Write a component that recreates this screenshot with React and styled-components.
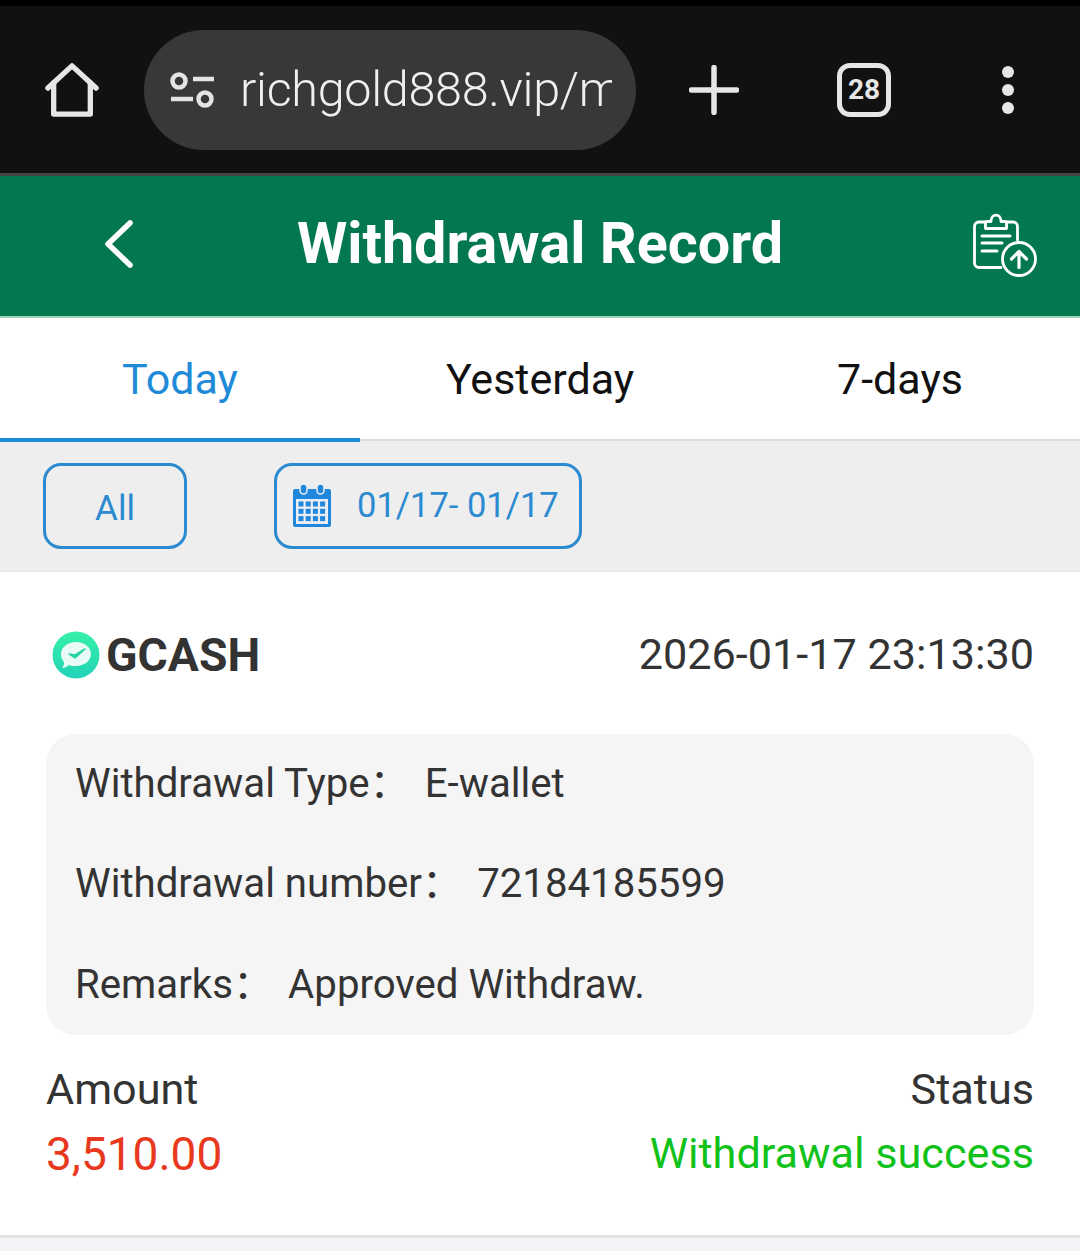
import React from 'react'
import styled, { createGlobalStyle } from 'styled-components'

const GlobalStyle = createGlobalStyle`
  html, body {
    margin: 0;
    padding: 0;
    background: #f2f3f7;
  }
  body {
    font-family: Roboto, "Noto Sans CJK SC", sans-serif;
  }
`

const Page = styled.div`
  width: 1080px;
  height: 1251px;
  overflow: hidden;
  background: #f2f3f7;
`

const BrowserBar = styled.div`
  height: 167px;
  border-top: 6px solid #000;
  border-bottom: 3px solid #444;
  background: #111;
  display: grid;
  grid-template-columns: 144px 492px 156px 144px 144px;
  align-items: center;
  color: #e6e6e6;
`

const BarIcon = styled.div`
  display: flex;
  align-items: center;
  justify-content: center;
`

const UrlPill = styled.div`
  height: 120px;
  border-radius: 60px;
  background: #383838;
  display: flex;
  align-items: center;
  padding: 0 24px 0 25px;
  gap: 25px;
  overflow: hidden;
`

const UrlText = styled.div`
  flex: 1;
  font-size: 48.5px;
  line-height: 60px;
  font-weight: 300;
  color: #f0f0f0;
  white-space: nowrap;
  overflow: hidden;
  letter-spacing: -0.3px;
`

const TabCount = styled.div`
  width: 44px;
  height: 44px;
  border: 5px solid #e6e6e6;
  border-radius: 13px;
  display: flex;
  align-items: center;
  justify-content: center;
  font-size: 28px;
  font-weight: 700;
`

const Header = styled.header`
  height: 140px;
  border-bottom: 2px solid #9ed0ba;
  background: #03784e;
  display: grid;
  grid-template-columns: 110px 1fr 110px;
  align-items: center;
  color: #fff;
`

const Title = styled.h1`
  margin: -4px 0 0;
  text-align: center;
  font-size: 57.5px;
  line-height: 66px;
  font-weight: 700;
`

const BackIcon = styled.div`
  display: flex;
  justify-content: flex-end;
  margin: -4px -26px 0 0;
`

const RecordIcon = styled.div`
  display: flex;
  justify-content: flex-end;
  padding-right: 43px;
  margin-top: -2px;
`

const Tabs = styled.nav`
  height: 124px;
  background: #fff;
  display: grid;
  grid-template-columns: repeat(3, 360px);
  box-sizing: border-box;
  border-bottom: 3px solid #ddd;
`

const Tab = styled.div`
  height: 124px;
  box-sizing: border-box;
  padding-top: 1px;
  display: flex;
  align-items: center;
  justify-content: center;
  font-size: 43px;
  color: ${p => (p.$active ? '#1f8bd8' : '#111')};
  border-bottom: 4px solid ${p => (p.$active ? '#1f8bd8' : 'transparent')};
`

const FilterBar = styled.div`
  height: 130px;
  box-sizing: border-box;
  margin-top: -1px;
  padding: 22px 0 0 43px;
  background: #eee;
  display: flex;
  align-items: flex-start;
  gap: 87px;
`

const FilterButton = styled.div`
  height: 86px;
  box-sizing: border-box;
  border: 3px solid #2b8ad0;
  border-radius: 18px;
  display: flex;
  align-items: center;
  width: ${p => p.$width}px;
  color: #2b8ad0;
`

const AllLabel = styled.span`
  width: 100%;
  margin-top: 4px;
  text-align: center;
  font-size: 35px;
`

const DateLabel = styled.span`
  margin: 0 0 2px 25px;
  font-size: 34.5px;
`

const CalendarWrap = styled.span`
  display: flex;
  margin-left: 15px;
`

const Card = styled.section`
  height: 667px;
  box-sizing: border-box;
  background: #fff;
  border-top: 1px solid #e6e6e6;
  border-bottom: 3px solid #e2e2e4;
  padding: 0 46px;
  color: #333;
`

const CardHead = styled.div`
  height: 162px;
  box-sizing: border-box;
  padding-top: 3px;
  display: flex;
  align-items: center;
  justify-content: space-between;
`

const Brand = styled.div`
  display: flex;
  align-items: center;
  gap: 6px;
  font-size: 46.3px;
  font-weight: 700;
  margin-left: 6px;
`

const Stamp = styled.div`
  font-size: 43.2px;
`

const Details = styled.div`
  height: 301px;
  box-sizing: border-box;
  padding: 0 29px;
  border-radius: 30px;
  background: #f5f5f5;
  display: flex;
  flex-direction: column;
  justify-content: space-around;
`

const DetailRow = styled.div`
  font-size: 40.2px;
  line-height: 48px;
  display: flex;
  gap: 15px;
  white-space: nowrap;
`

const Footer = styled.div`
  display: flex;
  justify-content: space-between;
  margin-top: 30px;
`

const FooterCol = styled.div`
  display: flex;
  flex-direction: column;
  gap: 14px;
  align-items: ${p => (p.$right ? 'flex-end' : 'flex-start')};
`

const Label = styled.div`
  font-size: 43.2px;
  line-height: 50px;
`

const Amount = styled.div`
  font-size: 46px;
  line-height: 50px;
  color: #e8391f;
`

const Status = styled.div`
  font-size: 43.2px;
  line-height: 50px;
  color: #10c21a;
`

const HomeIcon = () => (
  <svg width="54" height="54" viewBox="0 0 56 56" fill="none" stroke="#e6e6e6" strokeWidth="5.5" strokeLinejoin="round" strokeLinecap="round">
    <path d="M3 26 L28 3 L53 26" />
    <path d="M9 21 V53 H47 V21" />
  </svg>
)

const SlidersIcon = () => (
  <svg width="46" height="38" viewBox="0 0 46 38" fill="none" stroke="#e4e4e4" strokeWidth="4.5">
    <circle cx="10" cy="10" r="6.5" />
    <path d="M24 8 H45" />
    <path d="M2 28 H24" />
    <circle cx="36" cy="28" r="6.5" />
  </svg>
)

const PlusIcon = () => (
  <svg width="50" height="50" viewBox="0 0 50 50" stroke="#e6e6e6" strokeWidth="5.5" strokeLinecap="round">
    <path d="M25 2.5 V47.5 M2.500 25 H47.500" />
  </svg>
)

const MenuIcon = () => (
  <svg width="14" height="50" viewBox="0 0 14 50" fill="#e6e6e6">
    <circle cx="7" cy="7" r="6" />
    <circle cx="7" cy="25" r="6" />
    <circle cx="7" cy="43" r="6" />
  </svg>
)

const ChevronIcon = () => (
  <svg width="34" height="50" viewBox="0 0 34 50" fill="none" stroke="#fff" strokeWidth="5.5" strokeLinecap="round" strokeLinejoin="round">
    <path d="M28 4 L6 25 L28 46" />
  </svg>
)

const ClipboardUpIcon = () => (
  <svg width="64" height="64" viewBox="0 0 64 64" fill="none" stroke="#fff" strokeWidth="2.8" strokeLinecap="round" strokeLinejoin="round">
    <path d="M12 9 H6 a4.500 4.500 0 0 0 -4.500 4.500 V50 a4.500 4.500 0 0 0 4.500 4.500 H28" />
    <path d="M34 9 H40 a4.500 4.500 0 0 1 4.500 4.500 V27" />
    <path d="M12.500 15.500 V10 a1.500 1.500 0 0 1 1.500 -1.500 H18 C18 0 28 0 28 8.500 H32 a1.500 1.500 0 0 1 1.500 1.500 V15.500 Z" />
    <path d="M9 23 H37 M9 30 H29 M9 38 H24" strokeWidth="3" />
    <circle cx="46" cy="46" r="16.500" />
    <path d="M46 54.500 V39 M38.500 46 L46 38.500 L53.500 46" strokeWidth="3.200" />
  </svg>
)

const CalendarIcon = () => (
  <svg width="40" height="44" viewBox="0 0 40 44">
    <path d="M2 5 H36 a2 2 0 0 1 2 2 V41 a2 2 0 0 1 -2 2 H2 a2 2 0 0 1 -2 -2 V7 a2 2 0 0 1 2 -2 Z" fill="#1f87dc" transform="translate(1 0)" />
    <rect x="4" y="15" width="32" height="25" fill="#e8eef3" />
    <rect x="8" y="0" width="7" height="10" rx="3.500" fill="#1f87dc" stroke="#eee" strokeWidth="1.500" />
    <rect x="25" y="0" width="7" height="10" rx="3.500" fill="#1f87dc" stroke="#eee" strokeWidth="1.500" />
    {[0, 1, 2].map(r =>
      [0, 1, 2, 3].map(c => (
        <rect key={`${r}-${c}`} x={6.5 + c * 7.2} y={17.500 + r * 7.300} width="5" height="5" fill="#1f87dc" />
      ))
    )}
  </svg>
)

const GcashLogo = () => (
  <svg width="48" height="48" viewBox="0 0 48 48">
    <defs>
      <linearGradient id="gc" x1="0" y1="0" x2="0" y2="1">
        <stop offset="0" stopColor="#37f0a8" />
        <stop offset="1" stopColor="#22d3b8" />
      </linearGradient>
    </defs>
    <circle cx="24" cy="24" r="23.500" fill="url(#gc)" />
    <path d="M24 11 C33 11 39 17 39 23 C39 30 32 35 24 35 C21 35 19 35 17 34 C15 36 12 37 10 37 C12 35 12 33 12 31 C10 29 9 26 9 23 C9 16 16 11 24 11 Z" fill="#e9fbf6" />
    <path d="M17 23 L23 27 L33 18 L23 24 Z" fill="#24d3a5" stroke="#24d3a5" strokeWidth="1.500" strokeLinejoin="round" />
  </svg>
)

const App = () => (
  <Page>
    <GlobalStyle />
    <BrowserBar>
      <BarIcon><HomeIcon /></BarIcon>
      <UrlPill>
        <SlidersIcon />
        <UrlText>richgold888.vip/m</UrlText>
      </UrlPill>
      <BarIcon><PlusIcon /></BarIcon>
      <BarIcon><TabCount>28</TabCount></BarIcon>
      <BarIcon><MenuIcon /></BarIcon>
    </BrowserBar>
    <Header>
      <BackIcon><ChevronIcon /></BackIcon>
      <Title>Withdrawal Record</Title>
      <RecordIcon><ClipboardUpIcon /></RecordIcon>
    </Header>
    <Tabs>
      <Tab $active>Today</Tab>
      <Tab>Yesterday</Tab>
      <Tab>7-days</Tab>
    </Tabs>
    <FilterBar>
      <FilterButton $width={144}><AllLabel>All</AllLabel></FilterButton>
      <FilterButton $width={308}>
        <CalendarWrap><CalendarIcon /></CalendarWrap>
        <DateLabel>01/17- 01/17</DateLabel>
      </FilterButton>
    </FilterBar>
    <Card>
      <CardHead>
        <Brand><GcashLogo />GCASH</Brand>
        <Stamp>2026-01-17 23:13:30</Stamp>
      </CardHead>
      <Details>
        <DetailRow><span>Withdrawal Type：</span><span>E-wallet</span></DetailRow>
        <DetailRow><span>Withdrawal number：</span><span>72184185599</span></DetailRow>
        <DetailRow><span>Remarks：</span><span>Approved Withdraw.</span></DetailRow>
      </Details>
      <Footer>
        <FooterCol>
          <Label>Amount</Label>
          <Amount>3,510.00</Amount>
        </FooterCol>
        <FooterCol $right>
          <Label>Status</Label>
          <Status>Withdrawal success</Status>
        </FooterCol>
      </Footer>
    </Card>
  </Page>
)

export default App
